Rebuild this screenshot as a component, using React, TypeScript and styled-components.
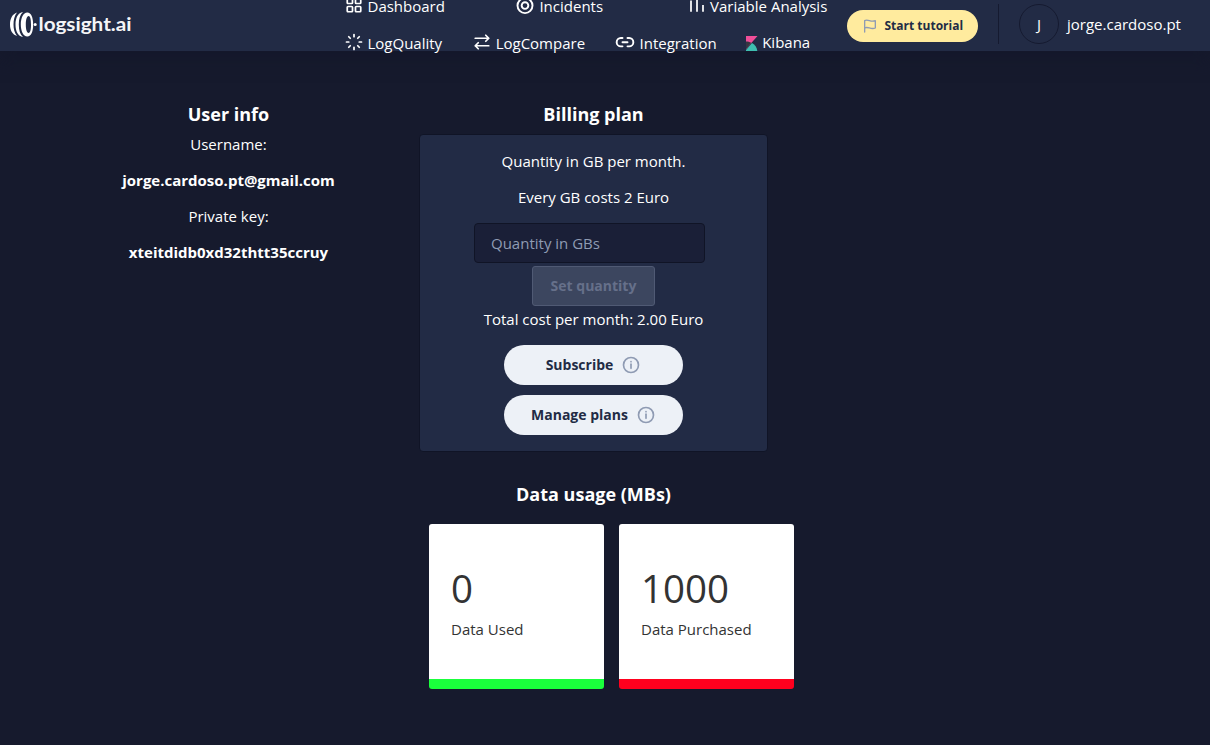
import React from "react";
import styled, { createGlobalStyle } from "styled-components";

const Global = createGlobalStyle`
  * { box-sizing: border-box; }
  body {
    margin: 0;
    background: #161a2d;
    color: #fff;
    font: 15px/20px "Open Sans", "Noto Sans", sans-serif;
    overflow: hidden;
  }
  p, h2 { margin: 0; }
`;

const Page = styled.div`
  height: 745px;
  overflow: hidden;
`;

const Header = styled.header`
  height: 51px;
  background: #222b45;
  box-shadow: 0 8px 16px 0 #14182b;
  display: flex;
`;

const Logo = styled.svg`
  width: 140px;
  height: 51px;
  flex: none;
`;

const Nav = styled.nav`
  width: 492px;
  margin-left: 205px;
  flex: none;
`;

const NavRow = styled.div<{ $top: number }>`
  display: flex;
  margin-top: ${(p) => p.$top}px;
  height: 20px;
`;

const NavItem = styled.a<{ $gap?: number; $lift?: number }>`
  display: flex;
  white-space: nowrap;
  margin-left: ${(p) => p.$gap ?? 0}px;
  margin-top: ${(p) => p.$lift ?? 0}px;
  color: #fff;
  svg { flex: none; margin: 0 4.500px 0 0; }
`;

const Actions = styled.div`
  display: flex;
  align-items: center;
  margin-left: 10px;
  height: 48px;
`;

const Tutorial = styled.button`
  width: 131px;
  height: 32px;
  margin-top: 4px;
  border: 0;
  border-radius: 16px;
  background: #ffeb9e;
  color: #222b45;
  font: bold 12px/16px "Open Sans", sans-serif;
  display: flex;
  align-items: center;
  padding: 0 0 0 15px;
  gap: 6.500px;
  white-space: nowrap;
`;

const Divider = styled.i`
  width: 1px;
  height: 40px;
  margin-left: 20px;
  background: #151a30;
`;

const Avatar = styled.span`
  width: 40px;
  height: 40px;
  margin-left: 20px;
  border: 1px solid #151a30;
  border-radius: 50%;
  display: flex;
  align-items: center;
  justify-content: center;
`;

const UserName = styled.span`
  margin-left: 8px;
`;

const Main = styled.main`
  display: flex;
  padding: 51px 0 0 55px;
`;

const Title = styled.h2`
  font-size: 18px;
  line-height: 24px;
  font-weight: 700;
  text-align: center;
`;

const UserInfo = styled.section`
  width: 347px;
  text-align: center;
`;

const InfoLine = styled.p<{ $bold?: boolean }>`
  margin: ${(p) => (p.$bold ? "16px 0" : "0")};
  font-weight: ${(p) => (p.$bold ? 700 : 400)};
`;

const InfoLines = styled.div`
  padding-top: 8px;
`;

const Billing = styled.section`
  width: 349px;
  margin-left: 17px;
`;

const Card = styled.div`
  height: 318px;
  margin-top: 8px;
  border: 1px solid #101426;
  border-radius: 4px;
  background: #222b45;
  display: flex;
  flex-direction: column;
  align-items: center;
  padding-top: 16px;
`;

const CardText = styled.p<{ $after: number }>`
  margin-bottom: ${(p) => p.$after}px;
`;

const QuantityInput = styled.input`
  width: 231px;
  height: 40px;
  flex: none;
  margin-right: 8px;
  padding: 0 16px;
  border: 1px solid #101426;
  border-radius: 4px;
  background: #1a1f37;
  color: #fff;
  font: 15px/24px "Open Sans", sans-serif;
  &::placeholder { color: #8f9bb3; opacity: 1; }
`;

const SetButton = styled.button`
  width: 123px;
  height: 40px;
  flex: none;
  margin: 3px 0;
  border: 1px solid #505a74;
  border-radius: 3px;
  background: #3c465f;
  color: #66708a;
  font: bold 14px/16px "Open Sans", sans-serif;
`;

const PillButton = styled.button`
  width: 179px;
  height: 40px;
  flex: none;
  margin-bottom: 10px;
  border: 0;
  border-radius: 20px;
  background: #edf1f7;
  color: #222b45;
  font: bold 14px/16px "Open Sans", sans-serif;
  display: flex;
  align-items: center;
  justify-content: center;
  gap: 8px;
`;

const UsageTitle = styled(Title)`
  margin-top: 30px;
`;

const Stats = styled.div`
  display: flex;
  gap: 15px;
  margin: 18px 0 0 10px;
`;

const Stat = styled.div<{ $bar: string }>`
  width: 175px;
  height: 165px;
  flex: none;
  border-radius: 3px;
  border-bottom: 10px solid ${(p) => p.$bar};
  background: #fff;
  color: #333;
  padding: 44px 22px 0;
  white-space: nowrap;
`;

const StatValue = styled.div`
  font-size: 38.500px;
  line-height: 40px;
`;

const StatLabel = styled.div`
  margin-top: 11px;
`;

const Icon = ({ children, size = 18 }: { children: React.ReactNode; size?: number }) => (
  <svg width={size} height={size} viewBox="0 0 24 24" fill="none" stroke="#fff" strokeWidth="2.3" strokeLinecap="round" strokeLinejoin="round">
    {children}
  </svg>
);

const InfoIcon = () => (
  <svg width="20" height="20" viewBox="0 0 24 24" fill="#8f9bb3">
    <path d="M12 2a10 10 0 1 0 10 10A10 10 0 0 0 12 2zm0 18a8 8 0 1 1 8-8 8 8 0 0 1-8 8z" />
    <circle cx="12" cy="8" r="1" />
    <path d="M12 10a1 1 0 0 0-1 1v5a1 1 0 0 0 2 0v-5a1 1 0 0 0-1-1z" />
  </svg>
);

const Brand = () => (
  <Logo viewBox="0 0 140 51">
    <g fill="#fff" fillRule="evenodd">
      <path d="M17 12.500C12.500 14 10 18.500 10 24.500S12.500 34.500 17 36C14.500 33 13.500 29 13.500 24.500S14.500 15.500 17 12.500z" />
      <path d="M23 12C18 12.500 15.500 18 15.500 24.500S18 36.500 23 37C20 34.500 18.800 30 18.800 24.500S20 14.500 23 12z" />
      <path d="M27.300 12.500C23.300 12.500 20.800 18 20.800 24.500S23.300 36.500 27.300 36.500 33.200 31 33.200 24.500 31.300 12.500 27.300 12.500zM28.600 16C30.400 16 31 20 31 24.500S30.400 33 28.600 33 25.800 29 25.800 24.500 26.800 16 28.600 16z" />
      <circle cx="35.200" cy="24.500" r="1.500" />
    </g>
    <text x="38.500" y="31" textLength="93" lengthAdjust="spacingAndGlyphs" fill="#f4f5f7" fontFamily="Lato" fontWeight="700" fontSize="19">logsight.ai</text>
  </Logo>
);

export default function App() {
  return (
    <Page>
      <Global />
      <Header>
        <Brand />
        <Nav>
          <NavRow $top={-4}>
            <NavItem>
              <Icon><rect x="3" y="3" width="7" height="7" rx="1" /><rect x="14" y="3" width="7" height="7" rx="1" /><rect x="3" y="14" width="7" height="7" rx="1" /><rect x="14" y="14" width="7" height="7" rx="1" /></Icon>
              Dashboard
            </NavItem>
            <NavItem $gap={70}>
              <Icon size={20}><circle cx="12" cy="11.500" r="9" /><circle cx="12" cy="11.500" r="4" /></Icon>
              Incidents
            </NavItem>
            <NavItem $gap={84.5}>
              <Icon><path d="M4 6v15M12 3v18M20 12v9" strokeLinecap="butt" /></Icon>
              Variable Analysis
            </NavItem>
          </NavRow>
          <NavRow $top={17}>
            <NavItem>
              <Icon><path d="M12 2v3M12 19v3M2 12h3M19 12h3M5 5l2 2M17 17l2 2M5 19l2-2M17 7l2-2" /></Icon>
              LogQuality
            </NavItem>
            <NavItem $gap={31}>
              <Icon><path d="M3 7h18M17 3l4 4-4 4M21 17H3M7 13l-4 4 4 4" /></Icon>
              LogCompare
            </NavItem>
            <NavItem $gap={30}>
              <Icon size={20}><path d="M9 16H7A5 5 0 0 1 7 6h2M15 6h2a5 5 0 0 1 0 10h-2M9 11h6" /></Icon>
              Integration
            </NavItem>
            <NavItem $gap={29} $lift={-1}>
              <svg width="12" height="20" viewBox="0 0 12 20">
                <path d="M0 4h11.500L0 17z" fill="#f04e98" />
                <path d="M0 9.500c2 0 3.700.5 5.200 1.400L0 17z" fill="#343741" />
                <path d="M6 11C9 12.800 11 15.500 11.300 19H0v-1z" fill="#3ebeb0" />
              </svg>
              Kibana
            </NavItem>
          </NavRow>
        </Nav>
        <Actions>
          <Tutorial>
            <svg width="16" height="16" viewBox="0 0 24 24" fill="none" stroke="#8f9bb3" strokeWidth="2" strokeLinecap="round" strokeLinejoin="round">
              <path d="M4 21V4c5-3 9 3 16 0v11c-7 3-11-3-16 0" />
            </svg>
            Start tutorial
          </Tutorial>
          <Divider />
          <Avatar>J</Avatar>
          <UserName>jorge.cardoso.pt</UserName>
        </Actions>
      </Header>
      <Main>
        <UserInfo>
          <Title>User info</Title>
          <InfoLines>
            <InfoLine>Username:</InfoLine>
            <InfoLine $bold>jorge.cardoso.pt@gmail.com</InfoLine>
            <InfoLine>Private key:</InfoLine>
            <InfoLine $bold>xteitdidb0xd32thtt35ccruy</InfoLine>
          </InfoLines>
        </UserInfo>
        <Billing>
          <Title>Billing plan</Title>
          <Card>
            <CardText $after={16}>Quantity in GB per month.</CardText>
            <CardText $after={16}>Every GB costs 2 Euro</CardText>
            <QuantityInput placeholder="Quantity in GBs" />
            <SetButton disabled>Set quantity</SetButton>
            <CardText $after={16}>Total cost per month: 2.00 Euro</CardText>
            <PillButton>Subscribe <InfoIcon /></PillButton>
            <PillButton>Manage plans <InfoIcon /></PillButton>
          </Card>
          <UsageTitle>Data usage (MBs)</UsageTitle>
          <Stats>
            <Stat $bar="#1aff3c"><StatValue>0</StatValue><StatLabel>Data Used</StatLabel></Stat>
            <Stat $bar="#ff001e"><StatValue>1000</StatValue><StatLabel>Data Purchased</StatLabel></Stat>
          </Stats>
        </Billing>
      </Main>
    </Page>
  );
}
